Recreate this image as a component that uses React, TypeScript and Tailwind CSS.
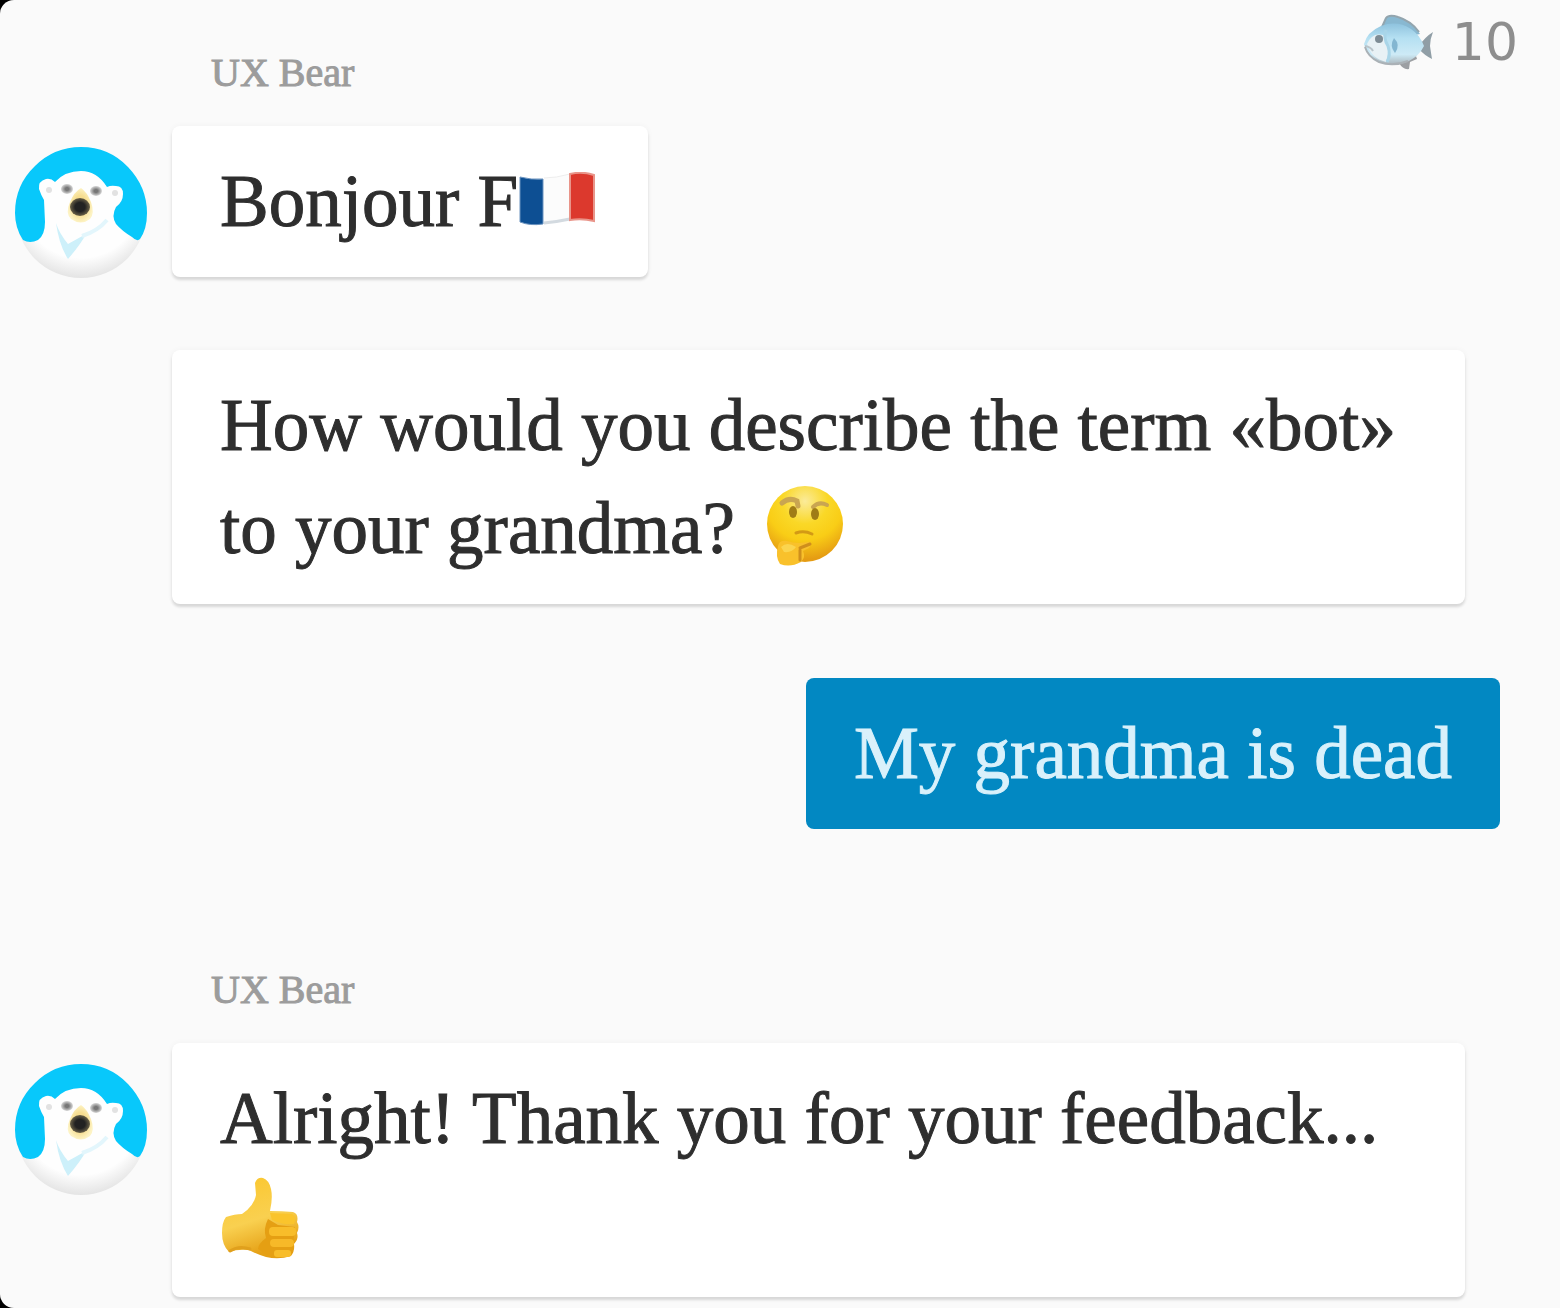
import React from 'react';

const BearAvatar = () => {
  return (
    <svg viewBox="0 0 134 134" className="h-[134px] w-[134px]" role="img" aria-label="UX Bear">
      <defs>
        <radialGradient id="avatar-fur" cx="0.5" cy="0.38" r="0.62">
          <stop offset="0.75" stopColor="#fefefe" />
          <stop offset="1" stopColor="#e4e4e4" />
        </radialGradient>
        <radialGradient id="avatar-muzzle">
          <stop offset="0.55" stopColor="#f6dd90" />
          <stop offset="1" stopColor="#fdf3c4" />
        </radialGradient>
        <radialGradient id="avatar-nose">
          <stop offset="0.5" stopColor="#222222" />
          <stop offset="1" stopColor="#6b6248" />
        </radialGradient>
        <radialGradient id="avatar-eye">
          <stop offset="0.3" stopColor="#777777" />
          <stop offset="1" stopColor="#d9d9d9" />
        </radialGradient>
      </defs>
      <circle cx="67" cy="67" r="65" fill="url(#avatar-fur)" />
      {/* Blue backdrop, left open around the bear */}
      <path
        d="M67 1 Q95 1 114 21 Q133 41 133 67 Q133 83 126 93 Q123 96 118 91 Q108 85 102 78 Q97 70 102 61 Q109 56 109 48 Q109 40 102 40 Q97 39 93 41 Q83 25 67 25 Q51 25 41 36 Q37 32 32 33 Q24 35 25 43 Q27 49 30 54 L31 76 Q31 89 24 94 Q16 98 9 94 Q1 82 1 67 Q1 39 21 20 Q40 1 67 1 Z"
        fill="#08c8fb"
      />
      <path d="M42 77 Q45 87 54 98 Q63 93 72 88 Q67 98 54 113 Q45 99 42 77 Z" fill="#cdf0fa" />
      <path d="M68 90 Q84 85 93 74" fill="none" stroke="#e3f6fc" strokeWidth="4" />
      {/* Ears and eyes */}
      <circle cx="35" cy="44" r="3" fill="#e2e2e2" />
      <circle cx="101" cy="47" r="3" fill="#e2e2e2" />
      <ellipse cx="53" cy="43" rx="6" ry="5" fill="url(#avatar-eye)" />
      <ellipse cx="82" cy="45" rx="6" ry="5" fill="url(#avatar-eye)" />
      {/* Muzzle */}
      <path d="M67 42 Q73 46 77 56 Q81 67 76 73 Q67 80 57 73 Q51 67 56 56 Q60 46 67 42 Z" fill="url(#avatar-muzzle)" />
      <ellipse cx="66" cy="61" rx="10" ry="9" fill="url(#avatar-nose)" />
    </svg>
  );
};

const FishIcon = () => {
  return (
    <svg viewBox="0 0 72 58" className="h-[58px] w-[72px]" aria-hidden="true">
      <defs>
        <linearGradient id="fish-body" x1="0" y1="0" x2="0" y2="1">
          <stop offset="0" stopColor="#8fc3de" />
          <stop offset="0.35" stopColor="#b5e0f2" />
          <stop offset="0.75" stopColor="#cdeaf6" />
          <stop offset="1" stopColor="#a9b4ba" />
        </linearGradient>
      </defs>
      <path d="M16 18 Q20 10 22 5 Q25 1 34 4 Q48 8 56 21 L40 24 Z" fill="#88b8d1" />
      <path d="M18 14 L22 5 Q25 1 34 4 Q47 8 55 19" fill="none" stroke="#93a5ae" strokeWidth="2" />
      <path d="M55 33 Q61 24 69 19 Q66 26 66 33 Q67 40 68 46 Q60 42 55 36 Z" fill="#909ea6" />
      <path d="M35 50 L52 43 L53 46 L46 49 L45 56 Q39 57 35 50 Z" fill="#9c9fa3" />
      <path d="M0 31 Q3 19 17 13 Q33 7 47 16 Q56 22 60 33 Q55 43 45 48 Q30 55 15 49 Q2 44 0 31 Z" fill="url(#fish-body)" />
      <path d="M3 31 Q8 19 19 22 Q27 32 22 49 Q7 45 3 31 Z" fill="#e8f1f5" />
      <path d="M22 17 Q19 25 24 33 Q27 42 23 49" fill="none" stroke="#a9d5e8" strokeWidth="3" />
      <path d="M30 25 Q37 32 31 40 Q25 33 30 25 Z" fill="#83b6d1" />
      <circle cx="15" cy="26" r="4" fill="#7d8c95" />
      <path d="M1 33 Q7 34 9 38" fill="none" stroke="#b9c4ca" strokeWidth="2" />
      <path d="M1 34 Q4 44 15 49 Q29 54 44 48" fill="none" stroke="#aab1b6" strokeWidth="2" />
    </svg>
  );
};

const FlagIcon = () => {
  return (
    <svg viewBox="0 0 78 56" className="mr-1 inline-block h-[56px] w-[78px] align-[-2px]" role="img" aria-label="France">
      <path d="M26 6 Q38 6 52 2 L52 47 Q40 49 26 52 Z" fill="#fcfcfc" />
      <path d="M26 6 Q38 6 52 2" fill="none" stroke="#eeeeee" strokeWidth="1" />
      <path d="M26 51 Q38 50 52 47" fill="none" stroke="#d3dae0" strokeWidth="3" />
      <path d="M2 5 Q13 8 25 7 L25 52 Q12 54 2 50 Z" fill="#0d4f93" stroke="#6b93bf" strokeWidth="1" />
      <path d="M52 2 Q64 -1 76 3 L76 49 Q64 46 52 48 Z" fill="#dc392d" stroke="#e9958a" strokeWidth="2" />
    </svg>
  );
};

const ThinkingIcon = () => {
  return (
    <svg viewBox="0 0 80 84" className="ml-3 inline-block h-[84px] w-[80px] align-[-15px]" role="img" aria-label="Thinking">
      <defs>
        <radialGradient id="thinking-face" cx="0.5" cy="0.2" r="0.85">
          <stop offset="0" stopColor="#fbeb9a" />
          <stop offset="0.35" stopColor="#fad827" />
          <stop offset="0.6" stopColor="#f9cd16" />
          <stop offset="0.9" stopColor="#e59c13" />
        </radialGradient>
      </defs>
      <circle cx="40" cy="40" r="38" fill="url(#thinking-face)" />
      <path d="M17 19 Q24 13 32 17 L33 22" fill="none" stroke="#c9a551" strokeWidth="5" strokeLinecap="round" />
      <path d="M48 23 Q54 17 62 21" fill="none" stroke="#c9a551" strokeWidth="4" strokeLinecap="round" />
      <ellipse cx="28" cy="28" rx="4" ry="6" fill="#a07c16" />
      <ellipse cx="50" cy="30" rx="4" ry="6" fill="#a07c16" />
      <path d="M31 49 Q39 46 47 50" fill="none" stroke="#d39a15" strokeWidth="3" strokeLinecap="round" />
      {/* Hand on the chin */}
      <path d="M13 62 Q14 56 22 57 Q28 59 34 59 L44 58 Q48 59 44 64 L38 67 Q41 73 36 78 Q25 84 15 80 Q10 73 13 62 Z" fill="#f9c12b" />
      <path d="M16 63 Q22 57 31 63 Q27 69 19 68 Z" fill="#fbd54f" />
      <path d="M35 66 L35 76 M35 64 L45 60" fill="none" stroke="#cf8f1c" strokeWidth="3" strokeLinecap="round" />
    </svg>
  );
};

const ThumbsUpIcon = () => {
  return (
    <svg viewBox="0 0 80 84" className="inline-block h-[84px] w-[80px] align-[-15px]" role="img" aria-label="Thumbs up">
      <defs>
        <linearGradient id="thumb-skin" x1="0" y1="0" x2="0.3" y2="1">
          <stop offset="0" stopColor="#fbc62c" />
          <stop offset="0.6" stopColor="#f9d050" />
          <stop offset="1" stopColor="#e5a015" />
        </linearGradient>
      </defs>
      <path
        d="M6 40 Q15 37 22 37 Q34 29 36 18 L35 6 Q37 0 43 1 Q49 3 51 12 Q53 21 50 34 Q62 34 73 35 Q79 37 77 45 Q80 50 77 56 Q79 62 74 67 Q75 74 71 79 Q59 83 46 80 Q36 77 29 73 Q17 72 9 75 Q2 68 2 56 Q2 45 6 40 Z"
        fill="url(#thumb-skin)"
      />
      <path d="M48 42 Q43 52 46 61 Q38 67 38 72 Q48 80 58 80 L72 76 L75 50 L58 48 Z" fill="#e59f13" />
      <path d="M50 36 L72 37 Q77 40 74 47 Q62 48 52 43 Z" fill="#fac42c" />
      <rect x="49" y="50" width="27" height="9" rx="4" fill="#f8bd2a" />
      <rect x="50" y="62" width="24" height="8" rx="4" fill="#f7b928" />
      <rect x="54" y="73" width="17" height="7" rx="3" fill="#f8bd2a" />
      <path d="M10 74 Q19 68 30 72" fill="none" stroke="#e0a01d" strokeWidth="3" strokeLinecap="round" />
    </svg>
  );
};

const botBubble =
  'w-fit rounded-lg bg-white px-12 py-6 text-[#2e2e2e] [-webkit-text-stroke:1px_#2e2e2e] shadow-[0_3px_3px_rgba(0,0,0,0.13),0_0_6px_rgba(0,0,0,0.04)]';

interface BotGroupProps {
  children: React.ReactNode;
}

// Sender name over a run of messages, avatar beside the first one
const BotGroup: React.FC<BotGroupProps> = ({ children }) => {
  return (
    <section>
      <h2 className="mb-6 pl-[211px] text-[40px] leading-[58px] text-[#9c9c9c] [-webkit-text-stroke:1px_#9c9c9c]">UX Bear</h2>
      <div className="flex items-start">
        <div className="w-[172px] shrink-0 pt-5 pl-[14px]">
          <BearAvatar />
        </div>
        <div className="flex min-w-0 flex-1 flex-col gap-[73px] pr-[95px]">{children}</div>
      </div>
    </section>
  );
};

const App = () => {
  return (
    <div className="bg-black">
      <main className="relative min-h-screen rounded-l-[14px] bg-[#fafafa] pt-11 pb-2 font-['Liberation_Serif','Times_New_Roman',serif] text-[73px] leading-[103px]">
        <div className="absolute top-2 right-[42px] flex items-center gap-4">
          <FishIcon />
          <span className="font-['DejaVu_Sans',sans-serif] text-[52px] leading-[68px] text-[#8e8e8e]">10</span>
        </div>

        <BotGroup>
          <p className={botBubble}>
            Bonjour F<FlagIcon />
          </p>
          <p className={botBubble}>
            How would you describe the term «bot» to your grandma? <ThinkingIcon />
          </p>
        </BotGroup>

        <div className="mt-[74px] mb-[132px] flex justify-end pr-[60px]">
          <p className="rounded-lg bg-[#0288c2] px-12 py-6 text-[#d9f1fb] [-webkit-text-stroke:1px_#d9f1fb]">My grandma is dead</p>
        </div>

        <BotGroup>
          <p className={botBubble}>
            Alright! Thank you for your feedback... <ThumbsUpIcon />
          </p>
        </BotGroup>
      </main>
    </div>
  );
};

export default App;
